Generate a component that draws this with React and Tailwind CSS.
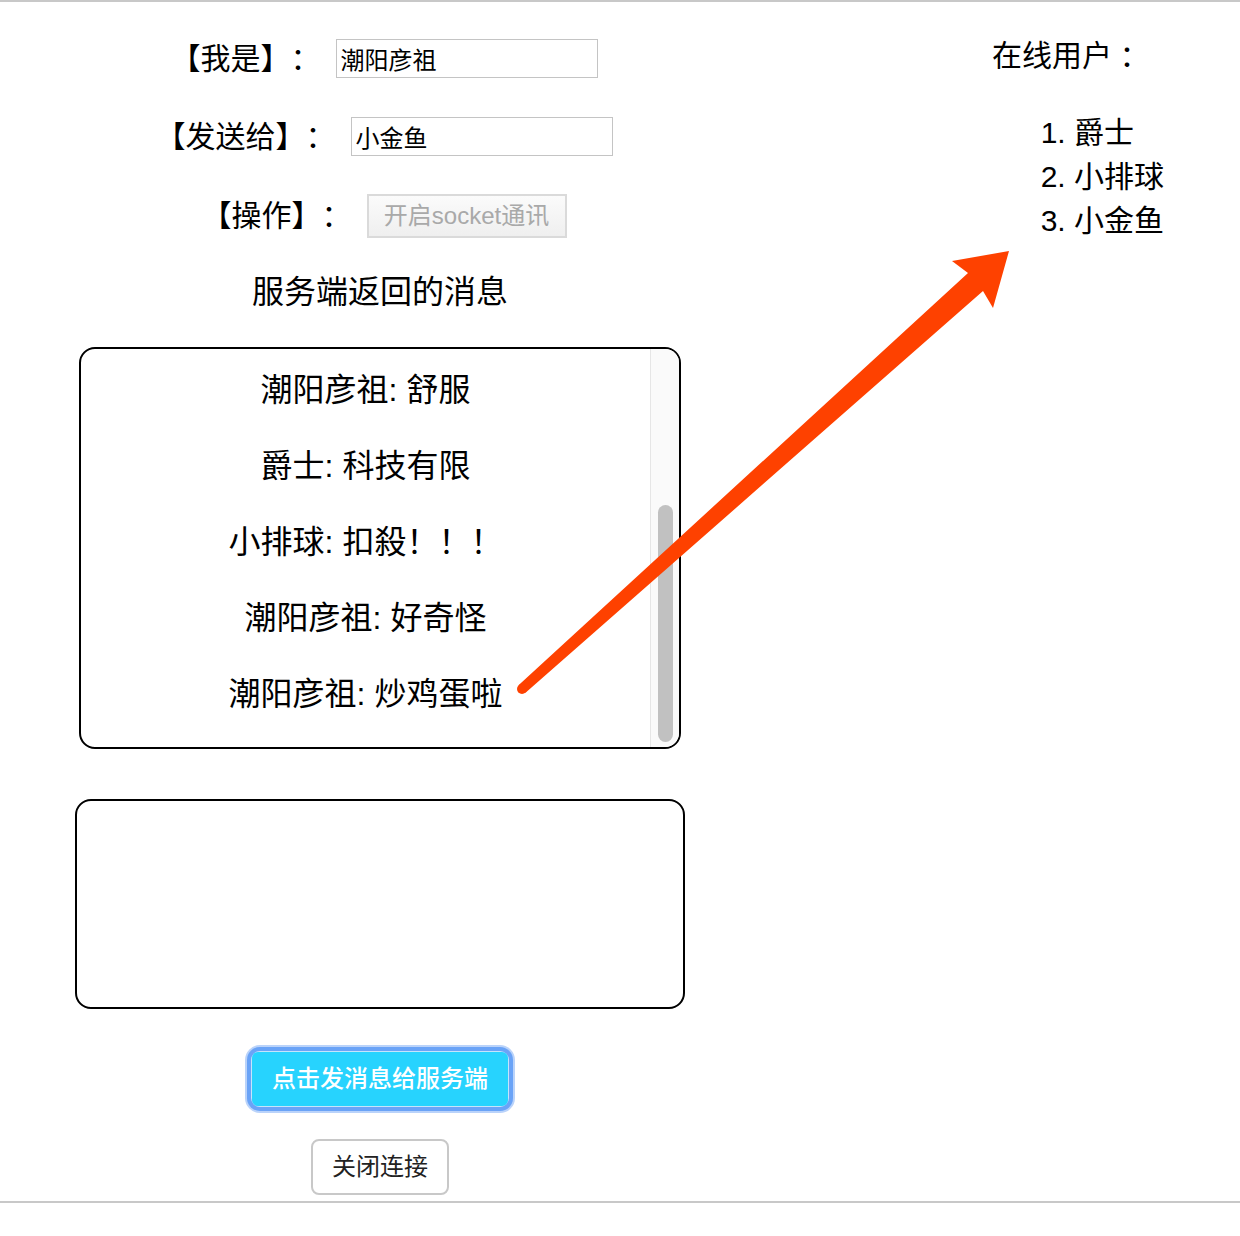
import React from 'react';

const messages = [
  '潮阳彦祖: 舒服',
  '爵士: 科技有限',
  '小排球: 扣殺！！！',
  '潮阳彦祖: 好奇怪',
  '潮阳彦祖: 炒鸡蛋啦',
];

const onlineUsers = ['爵士', '小排球', '小金鱼'];

const FieldRow = ({ label, children }) => (
  <div className="flex items-center justify-center pl-[8px]">
    <span className="text-[30px] leading-[40px] whitespace-nowrap">{label}</span>
    <div className="ml-[15px]">{children}</div>
  </div>
);

const App = () => {
  return (
    <div className="relative w-[1240px] h-[1236px] bg-white text-black font-['Liberation_Sans','Noto_Sans_CJK_SC',sans-serif] [text-spacing-trim:space-all] border-t-2 border-[#c8c8c8]">
      <div className="flex">
        {/* Chat panel */}
        <div className="w-[760px] flex flex-col items-center">
          <div className="mt-[37px] h-[39px] flex items-center">
            <FieldRow label="【我是】：">
              <input
                readOnly
                defaultValue="潮阳彦祖"
                className="w-[262px] h-[39px] border border-[#c4c4c4] px-[4px] text-[24px] outline-none"
              />
            </FieldRow>
          </div>

          <div className="mt-[39px] h-[39px] flex items-center">
            <FieldRow label="【发送给】：">
              <input
                readOnly
                defaultValue="小金鱼"
                className="w-[262px] h-[39px] border border-[#c4c4c4] px-[4px] text-[24px] outline-none"
              />
            </FieldRow>
          </div>

          <div className="mt-[38px] h-[44px] flex items-center">
            <FieldRow label="【操作】：">
              <button
                disabled
                className="w-[200px] h-[44px] border-2 border-[#dadada] bg-gradient-to-b from-[#fbfbfb] to-[#efefef] text-[24px] text-[#a9a9a9]"
              >
                开启socket通讯
              </button>
            </FieldRow>
          </div>

          <h2 className="mt-[30px] text-[32px] leading-[48px]">服务端返回的消息</h2>

          {/* Message list */}
          <div className="mt-[31px] w-[602px] h-[402px] border-2 border-black rounded-[16px] overflow-hidden flex">
            <div className="flex-1 pt-[3px] flex flex-col">
              {messages.map((m, i) => (
                <div key={i} className="h-[76px] flex items-center justify-center text-[32px] whitespace-nowrap">
                  {m}
                </div>
              ))}
            </div>
            <div className="w-[29px] bg-[#fafafa] border-l border-[#e6e6e6] flex flex-col justify-end items-center pb-[5px]">
              <div className="w-[15px] h-[237px] rounded-full bg-[#c1c1c1]" />
            </div>
          </div>

          <textarea className="mt-[50px] w-[610px] h-[210px] border-2 border-black rounded-[16px] resize-none outline-none p-2 text-[24px]" />

          <div className="mt-[43px] rounded-[8px] shadow-[0_0_0_1px_#c6e4fb,0_0_0_5px_#6aa3f7,0_0_0_7px_#bad3fa]">
            <button className="w-[256px] h-[54px] rounded-[6px] bg-[#27d3fe] text-white text-[24px] font-medium">
              点击发消息给服务端
            </button>
          </div>

          <button className="mt-[33px] w-[138px] h-[56px] border-2 border-[#c8c8c8] rounded-[8px] bg-white text-[24px] text-[#222]">
            关闭连接
          </button>
        </div>

        {/* Online users */}
        <div className="flex-1 pl-[232px]">
          <div className="mt-[31px] h-[45px] flex items-center text-[30px] whitespace-nowrap">
            在线用户<span className="font-['Noto_Sans_CJK_TC',sans-serif]">：</span>
          </div>
          <ol className="mt-[33px] pl-[82px] list-decimal text-[30px] leading-[44px]">
            {onlineUsers.map((u) => (
              <li key={u}>{u}</li>
            ))}
          </ol>
        </div>
      </div>

      <div className="mt-[6px] h-[2px] bg-[#c8c8c8]" />

      {/* Annotation arrow */}
      <svg className="absolute left-0 top-0 pointer-events-none" width="1240" height="1236" viewBox="0 0 1240 1236">
        <polygon
          fill="#fe4100"
          points="1009,249 993,306 983,289 525.5,690.8 518.5,683.2 968,271 952,259"
        />
        <circle cx="522" cy="687" r="5" fill="#fe4100" />
      </svg>
    </div>
  );
};

export default App;
